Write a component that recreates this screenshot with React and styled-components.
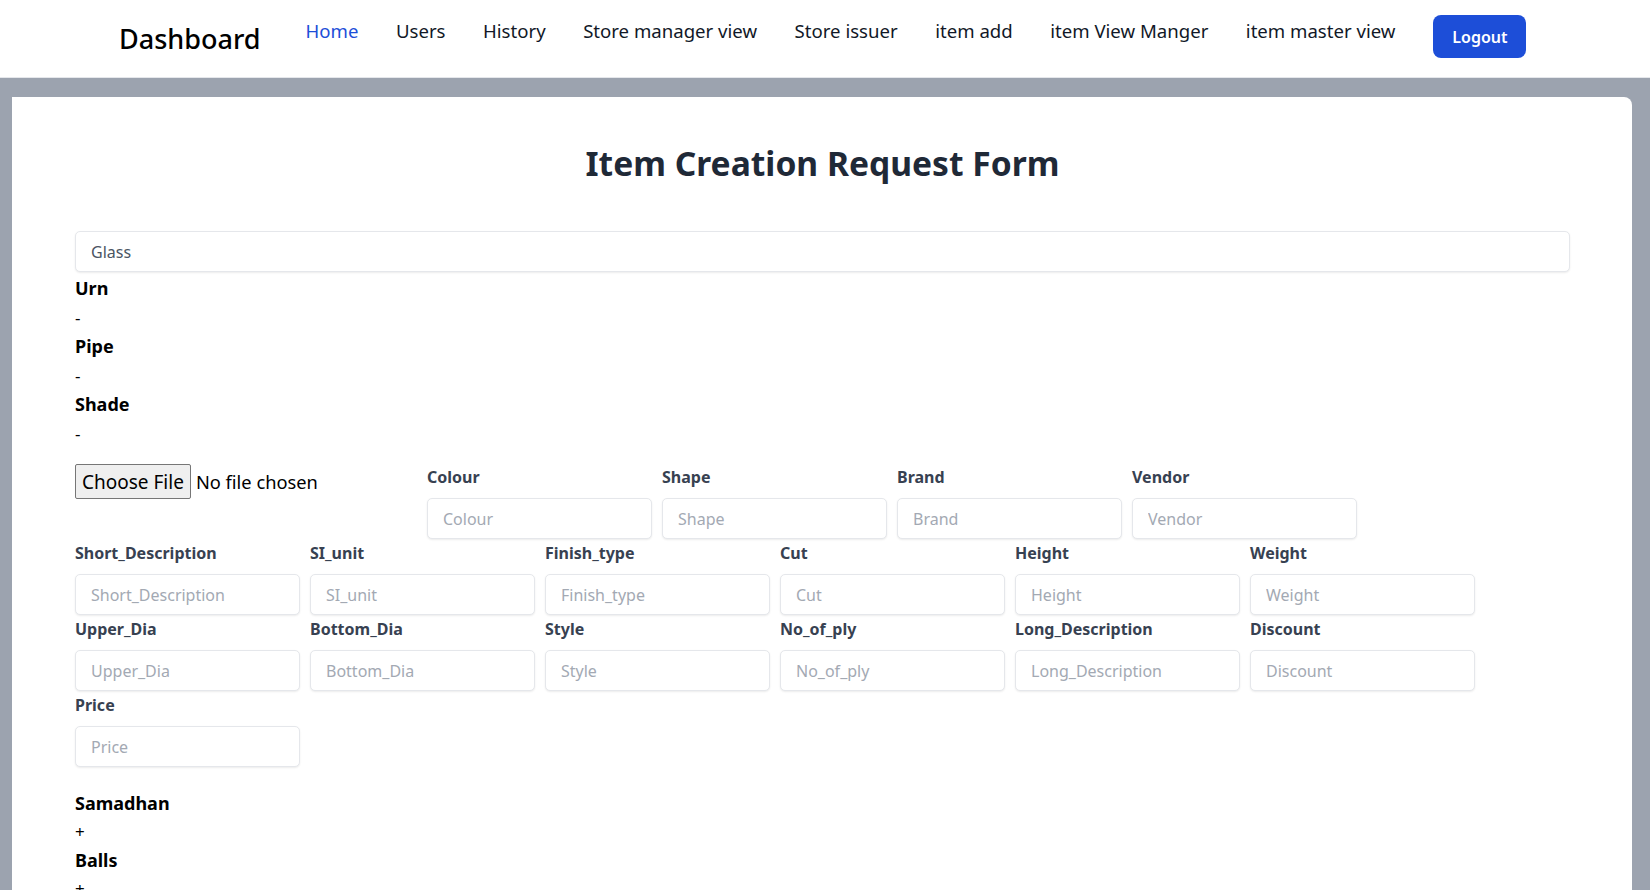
import React from 'react';
import styled, { createGlobalStyle } from 'styled-components';

const GlobalStyle = createGlobalStyle`
    html, body {
        margin: 0;
        padding: 0;
        background: #9ca3af;
        font-family: "Noto Sans", "Open Sans", Arial, sans-serif;
        color: #111827;
    }
    * {
        box-sizing: border-box;
    }
`;

const NavBar = styled.nav`
    height: 78px;
    background: #ffffff;
    border-bottom: 1px solid #e5e7eb;
    display: flex;
    align-items: flex-start;
    padding-left: 119px;
`;

const Brand = styled.div`
    margin-top: 19px;
    font-size: 27px;
    font-weight: 500;
    line-height: 40px;
    color: #000;
    margin-right: 45px;
`;

const NavLinks = styled.ul`
    display: flex;
    gap: 37.5px;
    list-style: none;
    margin: 0;
    padding: 17px 0 0 0;
`;

const NavLink = styled.li`
    font-size: 18.6px;
    line-height: 28px;
    color: ${(p) => (p.$active ? '#1d4ed8' : '#111827')};
    cursor: pointer;
`;

const LogoutButton = styled.button`
    margin: 15px 0 0 38px;
    width: 93px;
    height: 43px;
    background: #1d4ed8;
    color: #ffffff;
    border: none;
    border-radius: 8px;
    font-family: inherit;
    font-size: 16px;
    font-weight: 600;
    cursor: pointer;
`;

const Card = styled.main`
    margin: 19px 18px 0 12px;
    background: #ffffff;
    border-radius: 0 8px 0 0;
    padding: 46px 62px 40px 63px;
    min-height: 820px;
`;

const Title = styled.h1`
    margin: 0 0 48px 0;
    text-align: center;
    font-size: 33.6px;
    line-height: 40px;
    font-weight: 700;
    color: #1f2937;
`;

const TextInput = styled.input`
    display: block;
    width: ${(p) => (p.$full ? '100%' : '225px')};
    height: 41px;
    padding: 0 15px;
    border: 1px solid #e5e7eb;
    border-radius: 5px;
    box-shadow: 0 1px 2px rgba(0, 0, 0, 0.08);
    font-family: inherit;
    font-size: 16px;
    color: #4b5563;
    background: #fff;
    outline: none;

    &::placeholder {
        color: #a3a9b3;
    }
`;

const InfoBlock = styled.div`
    margin-top: ${(p) => p.$top || 0}px;
`;

const InfoTitle = styled.div`
    font-size: 18px;
    font-weight: 700;
    color: #000;
    line-height: ${(p) => p.$line}px;
`;

const InfoValue = styled.div`
    font-size: 17px;
    color: #000;
    line-height: ${(p) => p.$line}px;
`;

const FieldWrap = styled.div`
    display: flex;
    flex-wrap: wrap;
    column-gap: 10px;
    row-gap: 2px;
    margin-top: 17px;
    align-items: flex-start;
`;

const FileField = styled.div`
    width: 342px;
    display: flex;
    align-items: center;
    gap: 5px;
    margin-top: -1px;
`;

const FileButton = styled.button`
    height: 35px;
    padding: 0 6px;
    border: 1px solid #767676;
    border-radius: 2px;
    background: #efefef;
    color: #000;
    font-family: inherit;
    font-size: 19px;
`;

const FileText = styled.span`
    font-size: 18.3px;
    color: #000;
`;

const Field = styled.div`
    width: 225px;
`;

const FieldLabel = styled.label`
    display: block;
    font-size: 16px;
    font-weight: 700;
    line-height: 24px;
    margin-bottom: 9px;
    color: #374151;
`;

const navItems = [
    'Home',
    'Users',
    'History',
    'Store manager view',
    'Store issuer',
    'item add',
    'item View Manger',
    'item master view',
];

const fields = [
    'Colour', 'Shape', 'Brand', 'Vendor',
    'Short_Description', 'SI_unit', 'Finish_type', 'Cut', 'Height', 'Weight',
    'Upper_Dia', 'Bottom_Dia', 'Style', 'No_of_ply', 'Long_Description', 'Discount',
    'Price',
];

const Info = ({ items, line, top }) => (
    <InfoBlock $top={top}>
        {items.map(([name, value]) => (
            <React.Fragment key={name}>
                <InfoTitle $line={line}>{name}</InfoTitle>
                <InfoValue $line={line}>{value}</InfoValue>
            </React.Fragment>
        ))}
    </InfoBlock>
);

const App = () => {
    return (
        <>
            <GlobalStyle />
            <NavBar>
                <Brand>Dashboard</Brand>
                <NavLinks>
                    {navItems.map((item, i) => (
                        <NavLink key={item} $active={i === 0}>{item}</NavLink>
                    ))}
                </NavLinks>
                <LogoutButton>Logout</LogoutButton>
            </NavBar>
            <Card>
                <Title>Item Creation Request Form</Title>
                <TextInput $full value="Glass" readOnly />
                <Info
                    top={2}
                    line={29}
                    items={[['Urn', '-'], ['Pipe', '-'], ['Shade', '-']]}
                />
                <FieldWrap>
                    <FileField>
                        <FileButton>Choose File</FileButton>
                        <FileText>No file chosen</FileText>
                    </FileField>
                    {fields.map((f) => (
                        <Field key={f}>
                            <FieldLabel>{f}</FieldLabel>
                            <TextInput placeholder={f} />
                        </Field>
                    ))}
                </FieldWrap>
                <Info
                    top={22}
                    line={28.5}
                    items={[['Samadhan', '+'], ['Balls', '+']]}
                />
            </Card>
        </>
    );
};

export default App;
